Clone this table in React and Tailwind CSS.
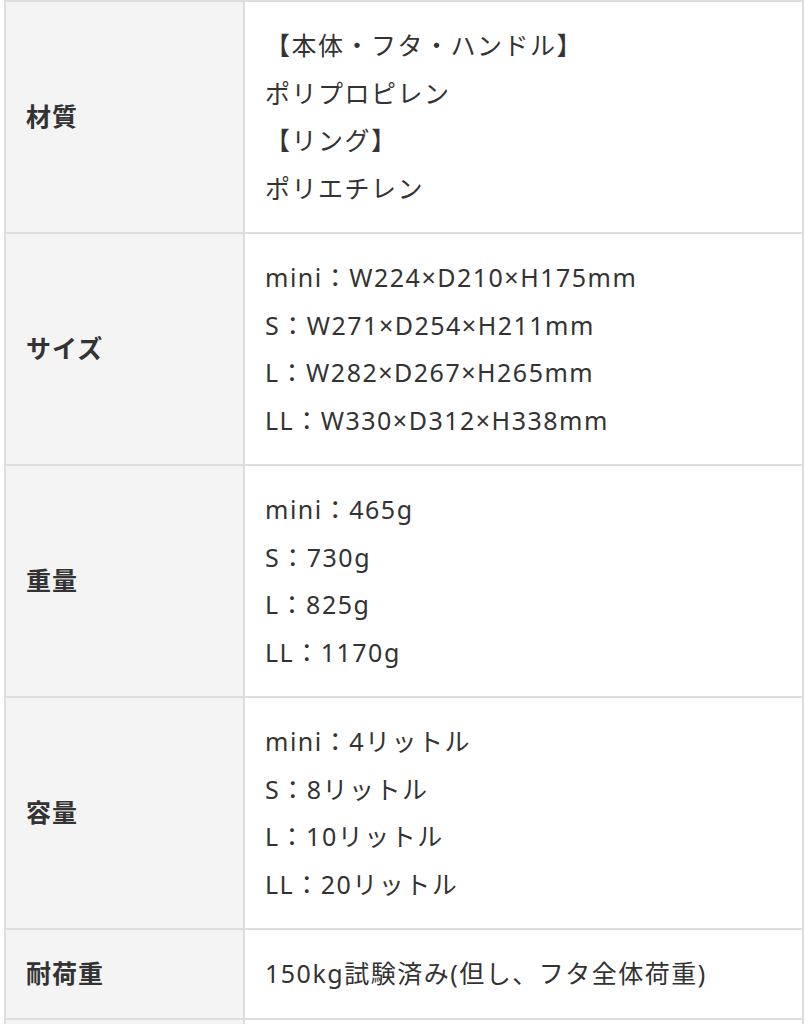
export default function App() {
  const rows = [
    { label: "材質", lines: ["【本体・フタ・ハンドル】", "ポリプロピレン", "【リング】", "ポリエチレン"] },
    { label: "サイズ", lines: ["mini：W224×D210×H175mm", "S：W271×D254×H211mm", "L：W282×D267×H265mm", "LL：W330×D312×H338mm"] },
    { label: "重量", lines: ["mini：465g", "S：730g", "L：825g", "LL：1170g"] },
    { label: "容量", lines: ["mini：4リットル", "S：8リットル", "L：10リットル", "LL：20リットル"] },
    { label: "耐荷重", lines: ["150kg試験済み(但し、フタ全体荷重)"] },
  ];
  return (
    <div className="px-1 bg-white" style={{ fontFamily: '"Noto Sans", "Noto Sans CJK JP", sans-serif' }}>
      <table className="w-full border-collapse text-[25px] leading-[47.5px] tracking-[0.06em] text-[#333333]">
        <tbody>
          {rows.map((r) => (
            <tr key={r.label}>
              <th className="w-[239px] border-2 border-[#dddddd] bg-[#f4f4f4] px-5 py-5 text-left align-middle font-bold tracking-[0.04em]">
                {r.label}
              </th>
              <td className="border-2 border-[#dddddd] bg-white px-5 py-5 align-middle font-normal">
                {r.lines.map((l, i) => (
                  <div key={i}>{l}</div>
                ))}
              </td>
            </tr>
          ))}
          <tr>
            <th className="w-[239px] border-2 border-[#dddddd] bg-[#f4f4f4] px-5 py-5 text-left font-bold">&nbsp;</th>
            <td className="border-2 border-[#dddddd] bg-white px-5 py-5">&nbsp;</td>
          </tr>
        </tbody>
      </table>
    </div>
  );
}
